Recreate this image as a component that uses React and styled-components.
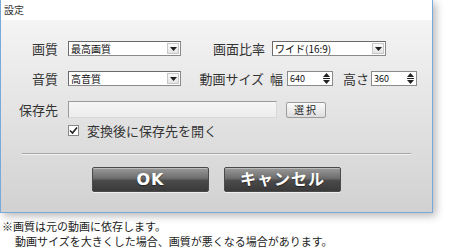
import styled, { createGlobalStyle } from "styled-components";

const Global = createGlobalStyle`
    body {
        margin: 0;
        background: #ffffff;
        font-family: "Noto Sans CJK JP", "Noto Sans", sans-serif;
        color: #333;
    }
`;

function Select({ value, width }) {
    return (
        <SelectBox $width={width}>
            <span>{value}</span>
            <Arrow>
                <svg width="7" height="4" viewBox="0 0 7 4">
                    <path d="M0 0 L7 0 L3.5 4 Z" fill="#222" />
                </svg>
            </Arrow>
        </SelectBox>
    );
}

function Spin({ value }) {
    return (
        <SpinBox>
            <span>{value}</span>
            <SpinArrows>
                <svg width="7" height="11" viewBox="0 0 7 11">
                    <path d="M0 4 L7 4 L3.5 0 Z" fill="#222" />
                    <rect x="0" y="5" width="7" height="1" fill="#222" />
                    <path d="M0 7 L7 7 L3.5 11 Z" fill="#222" />
                </svg>
            </SpinArrows>
        </SpinBox>
    );
}

export default function App() {
    return (
        <>
            <Global />
            <Page>
                <Window>
                    <TitleBar>設定</TitleBar>
                    <Body>
                        <Row $top={21}>
                            <Label $width={57}>画質</Label>
                            <Select value="最高画質" width={113} />
                            <Label $width={84} $gap={7}>画面比率</Label>
                            <Select value="ワイド(16:9)" width={114} />
                        </Row>
                        <Row $top={15}>
                            <Label $width={57}>音質</Label>
                            <Select value="高音質" width={113} />
                            <Label $width={83} $gap={6}>動画サイズ</Label>
                            <Label $width={13} $gap={4}>幅</Label>
                            <Spin value="640" />
                            <Label $width={26} $gap={2}>高さ</Label>
                            <Spin value="360" />
                        </Row>
                        <Row $top={16}>
                            <Label $width={57}>保存先</Label>
                            <PathInput />
                            <SmallButton>選択</SmallButton>
                        </Row>
                        <CheckRow>
                            <CheckBox>
                                <svg width="9" height="9" viewBox="0 0 9 9">
                                    <path d="M1 4.5 L3.5 7 L8 1.5" stroke="#222" strokeWidth="1.6" fill="none" />
                                </svg>
                            </CheckBox>
                            変換後に保存先を開く
                        </CheckRow>
                        <Separator />
                        <Buttons>
                            <BigButton>OK</BigButton>
                            <BigButton>キャンセル</BigButton>
                        </Buttons>
                    </Body>
                </Window>
                <Note>
                    <p>※画質は元の動画に依存します。</p>
                    <p className="indent">動画サイズを大きくした場合、画質が悪くなる場合があります。</p>
                </Note>
            </Page>
        </>
    );
}

const Page = styled.div`
    width: 454px;
    height: 252px;
    overflow: hidden;
`;

const Window = styled.div`
    width: 431px;
    border: 1px solid #7ba9d9;
    border-top: none;
    box-shadow: 3px 3px 8px rgba(0, 0, 0, 0.28);
`;

const TitleBar = styled.div`
    height: 20px;
    background: #ffffff;
    font-size: 10px;
    line-height: 20px;
    padding-left: 3px;
    color: #333;
`;

const Body = styled.div`
    height: 192px;
    box-sizing: border-box;
    background: linear-gradient(#f4f4f4, #d1d1d1);
    display: flex;
    flex-direction: column;
`;

const Row = styled.div`
    display: flex;
    align-items: center;
    height: 15px;
    margin-top: ${(p) => p.$top}px;
`;

const Label = styled.div`
    width: ${(p) => p.$width}px;
    flex-shrink: 0;
    text-align: right;
    font-size: 13px;
    color: #333;
    margin-right: ${(p) => p.$gap ?? 10}px;
    white-space: nowrap;
    line-height: 15px;
`;

const SelectBox = styled.div`
    width: ${(p) => p.$width}px;
    height: 15px;
    box-sizing: border-box;
    background: #fff;
    border: 1px solid #8a8a8a;
    border-top-color: #6a6a6a;
    border-left-color: #6a6a6a;
    display: flex;
    align-items: center;
    justify-content: space-between;
    font-size: 10px;
    padding-left: 2px;
    color: #111;
    flex-shrink: 0;
`;

const Arrow = styled.div`
    width: 12px;
    height: 11px;
    margin-right: 1px;
    border: 1px solid #c8c8c8;
    box-sizing: border-box;
    background: linear-gradient(#fafafa, #e4e4e4);
    display: flex;
    align-items: center;
    justify-content: center;
`;

const SpinBox = styled.div`
    width: 46px;
    height: 15px;
    box-sizing: border-box;
    background: #fff;
    border: 1px solid #8a8a8a;
    display: flex;
    align-items: center;
    justify-content: space-between;
    font-size: 9px;
    padding-left: 2px;
    color: #111;
    flex-shrink: 0;
    margin-right: 10px;
`;

const SpinArrows = styled.div`
    width: 12px;
    height: 13px;
    display: flex;
    align-items: center;
    justify-content: center;
`;

const PathInput = styled.div`
    width: 209px;
    height: 17px;
    box-sizing: border-box;
    background: linear-gradient(#f6f6f6, #ececec);
    border: 1px solid #9a9a9a;
    border-bottom-color: #d8d8d8;
    border-right-color: #d8d8d8;
    margin-right: 9px;
`;

const SmallButton = styled.div`
    width: 40px;
    height: 16px;
    box-sizing: border-box;
    border: 1px solid #9c9c9c;
    border-radius: 2px;
    background: linear-gradient(#fbfbfb, #dedede);
    font-size: 10px;
    line-height: 14px;
    text-align: center;
    color: #222;
    letter-spacing: 2px;
`;

const CheckRow = styled.div`
    display: flex;
    align-items: center;
    margin: 6px 0 0 67px;
    font-size: 13px;
    color: #333;
    height: 14px;
`;

const CheckBox = styled.div`
    width: 11px;
    height: 11px;
    box-sizing: border-box;
    background: #fff;
    border: 1px solid #888;
    margin-right: 8px;
    display: flex;
    align-items: center;
    justify-content: center;
`;

const Separator = styled.div`
    margin: 16px 21px 0 21px;
    height: 1px;
    background: #a8a8a8;
    border-bottom: 1px solid #f2f2f2;
`;

const Buttons = styled.div`
    display: flex;
    gap: 15px;
    margin: 12px 0 0 91px;
`;

const BigButton = styled.div`
    width: 117px;
    height: 25px;
    box-sizing: border-box;
    border: 1px solid #4a4a4a;
    border-radius: 2px;
    background: linear-gradient(#9a9a9a 0%, #6c6c6c 45%, #4a4a4a 55%, #3a3a3a 100%);
    box-shadow: inset 0 1px 0 rgba(255, 255, 255, 0.35), 0 1px 0 #f0f0f0;
    color: #fff;
    font-family: "DejaVu Sans", "Noto Sans CJK JP", sans-serif;
    font-weight: 700;
    font-size: 16px;
    line-height: 23px;
    text-align: center;
    letter-spacing: 1px;
    text-shadow: 0 1px 1px rgba(0, 0, 0, 0.5);
`;

const Note = styled.div`
    margin-top: 6px;
    padding-left: 2px;
    font-size: 11px;
    color: #222;
    line-height: 15px;

    p {
        margin: 0;
        height: 15px;
    }

    .indent {
        padding-left: 13px;
    }
`;
